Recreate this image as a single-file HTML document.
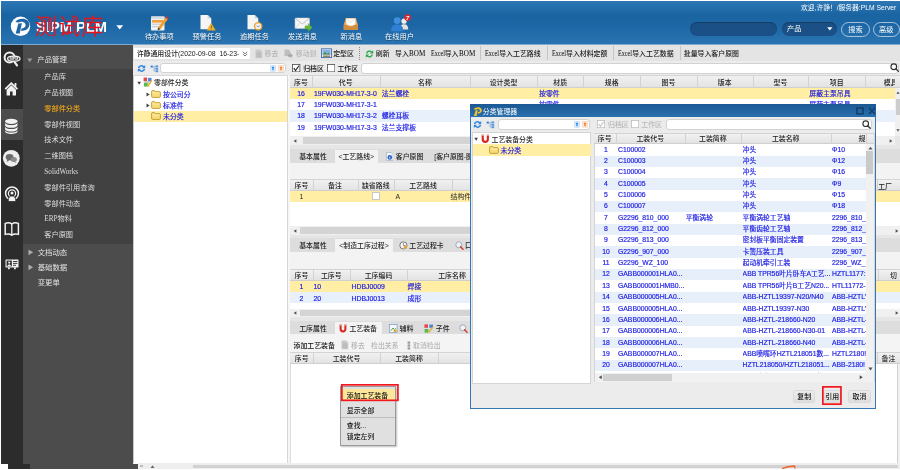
<!DOCTYPE html><html><head><meta charset="utf-8"><title>SIPM PLM</title><style>
*{box-sizing:border-box;margin:0;padding:0}
html,body{width:900px;height:470px;overflow:hidden;background:#fff}
body{position:relative;will-change:transform;font-family:"Liberation Sans","Noto Sans CJK SC",sans-serif;font-size:7px;color:#222;line-height:1;font-weight:500}
.a{position:absolute}
.t{position:absolute;white-space:nowrap;line-height:10px;height:10px}
.b{color:#1c1ce4;font-weight:400;-webkit-text-stroke:0.18px #1c1ce4}
.ser{font-family:"Liberation Serif","Noto Sans CJK SC",serif}
.hd{background:linear-gradient(#f4f4f4,#e2e2e2);}
.c{text-align:center}
.sq{display:inline-block;font-size:8px;transform-origin:0 50%;line-height:10px;vertical-align:top;color:#000}
</style></head><body>
<div class="a " style="left:1px;top:1px;width:899px;height:43.5px;background:linear-gradient(#2d77b4 0%,#2470ae 12%,#1b64a2 32%,#1c66a5 55%,#2670ae 85%,#2a74b2 100%)"></div>
<div class="a " style="left:1px;top:44.2px;width:899px;height:0.8px;background:#7fa9cf"></div>
<svg class="a" style="left:0px;top:0px" width="40" height="44" viewBox="0 0 40 44"><circle cx="20.5" cy="26.3" r="9.7" fill="#fdfdfd"/><path d="M15.4 22 C17.6 18.6 24 17.6 27.6 20.4 C31.2 23.4 29.6 29.2 24 30.5 L21 30.9 L21.6 28.5 C25 28 26.6 25.6 25 23.4 C23.6 21.6 20.6 21.4 18.5 22.6 Z" fill="#1f66a8"/><path d="M18.3 23.6 L21.9 23.2 L19.7 33.4 L15.7 33.4 Z" fill="#1f66a8"/></svg>
<div class="t " style="left:36.1px;top:22.0px;color:#fff;font-weight:bold;font-size:14.7px;line-height:16px;height:16px;top:18.6px">SIPM PLM</div>
<div class="t " style="left:35px;top:21.5px;color:#e8131b;font-size:21.7px;letter-spacing:1.5px;line-height:24px;height:24px;top:15.2px;font-weight:300;-webkit-text-stroke:0.45px #f0121a;font-family:"Liberation Serif","Noto Serif CJK SC",serif;">测试库</div>
<svg class="a" style="left:115.5px;top:24.5px" width="8" height="5" viewBox="0 0 8 5"><path d="M0.3 0.3H7.2L3.75 4.4Z" fill="#fff"/></svg>
<div class="t " style="left:134.3px;top:31.7px;width:50px;color:#fff;font-size:7.2px;text-align:center;font-weight:400;text-shadow:0 0.5px 0.5px rgba(0,0,0,.35)">待办事项</div>
<div class="t " style="left:182px;top:31.7px;width:50px;color:#fff;font-size:7.2px;text-align:center;font-weight:400;text-shadow:0 0.5px 0.5px rgba(0,0,0,.35)">预警任务</div>
<div class="t " style="left:229.5px;top:31.7px;width:50px;color:#fff;font-size:7.2px;text-align:center;font-weight:400;text-shadow:0 0.5px 0.5px rgba(0,0,0,.35)">逾期任务</div>
<div class="t " style="left:277.5px;top:31.7px;width:50px;color:#fff;font-size:7.2px;text-align:center;font-weight:400;text-shadow:0 0.5px 0.5px rgba(0,0,0,.35)">发送消息</div>
<div class="t " style="left:326.3px;top:31.7px;width:50px;color:#fff;font-size:7.2px;text-align:center;font-weight:400;text-shadow:0 0.5px 0.5px rgba(0,0,0,.35)">新消息</div>
<div class="t " style="left:374.5px;top:31.7px;width:50px;color:#fff;font-size:7.2px;text-align:center;font-weight:400;text-shadow:0 0.5px 0.5px rgba(0,0,0,.35)">在线用户</div>
<svg class="a" style="left:150px;top:15px" width="20" height="17" viewBox="0 0 20 17">
<rect x="1" y="1.5" width="13.5" height="14" rx="1" fill="#f4f4f4"/>
<rect x="1" y="1.5" width="13.5" height="2.6" fill="#d9dde2"/>
<rect x="2" y="5" width="11.5" height="2.6" fill="#f3a13a"/>
<rect x="2" y="8.6" width="11.5" height="1.2" fill="#c9ced4"/>
<rect x="2" y="11" width="9" height="1.2" fill="#c9ced4"/>
<path d="M8.2 12.6 L15.6 2.6 L17.8 4.2 L10.4 14.2 L7.6 15.2 Z" fill="#f0a030"/>
<path d="M15.6 2.6 L16.6 1.2 L18.8 2.8 L17.8 4.2Z" fill="#d6372c"/>
<path d="M8.2 12.6 L10.4 14.2 L7.6 15.2Z" fill="#444"/>
</svg>
<svg class="a" style="left:199px;top:14px" width="20" height="18" viewBox="0 0 20 18"><path d="M1.5 1 h7.2 l3.6 3.6 v10.6 h-10.8Z" fill="#f5f5f3"/><path d="M8.7 1 v3.6 h3.6Z" fill="#cfd3d6"/><path d="M12.2 9.3 L16.4 16.3 H8 Z" fill="#f2b632" stroke="#d89a1a" stroke-width="0.5"/><rect x="11.9" y="11.6" width="0.7" height="2.6" fill="#5a3c00"/><rect x="11.9" y="14.7" width="0.7" height="0.7" fill="#5a3c00"/></svg>
<svg class="a" style="left:246px;top:14px" width="20" height="18" viewBox="0 0 20 18"><path d="M1.5 1 h7.2 l3.6 3.6 v10.6 h-10.8Z" fill="#f5f5f3"/><path d="M8.7 1 v3.6 h3.6Z" fill="#cfd3d6"/><circle cx="12.2" cy="12.3" r="3.6" fill="#f3f3f7" stroke="#e8a020" stroke-width="1.3"/><path d="M10.8 11.6 L12.2 13 L13.7 11.6" stroke="#7a6aa8" stroke-width="0.9" fill="none"/></svg>
<svg class="a" style="left:294px;top:17px" width="20" height="15" viewBox="0 0 20 15">
<rect x="1" y="1" width="14.5" height="10.5" rx="0.8" fill="#f6f6f6" stroke="#c9c9c9" stroke-width="0.5"/>
<path d="M1.3 1.4 L8.2 7 L15.2 1.4" stroke="#b5b5b5" stroke-width="0.8" fill="none"/>
<path d="M1.3 11.2 L6 6" stroke="#c5c5c5" stroke-width="0.5"/><path d="M15.2 11.2 L10.5 6" stroke="#c5c5c5" stroke-width="0.5"/>
<path d="M11 9 h3.2 v-2.4 l4 3.9 l-4 3.9 v-2.4 h-3.2Z" fill="#6bb83a" stroke="#4e9a26" stroke-width="0.4"/>
</svg>
<svg class="a" style="left:343.3px;top:15.5px" width="16" height="15.5" viewBox="0 0 18 17">
<path d="M3 2 h11.5 l2.3 7.5 v5.8 h-16 v-5.8Z" fill="#e9a55a"/>
<rect x="3.6" y="2.6" width="10.4" height="8" fill="#fbfbfb"/>
<path d="M4 3 L8.8 6.6 L13.6 3" stroke="#d5d5d5" stroke-width="0.6" fill="none"/>
<path d="M0.8 9.5 h4.6 l1 2.2 h4.8 l1 -2.2 h4.6 v5.8 h-16Z" fill="#d48c3e"/>
</svg>
<svg class="a" style="left:388.5px;top:13px" width="24" height="20" viewBox="0 0 24 20">
<circle cx="15" cy="8.2" r="2.6" fill="#f1efe6"/><path d="M10.8 16.5 c0-4 2-5.2 4.2-5.2 s4.2 1.2 4.2 5.2Z" fill="#e6e4da"/>
<circle cx="8.2" cy="7.6" r="3.4" fill="#3f8fe0"/><path d="M2 18.2 c0-5.4 3-6.8 6.2-6.8 s6.2 1.4 6.2 6.8Z" fill="#2f7fd6"/>
<circle cx="18.6" cy="4.6" r="3.3" fill="#e0242c"/>
<text x="18.6" y="6.6" font-size="5.6" fill="#fff" text-anchor="middle" font-weight="bold" font-style="italic" font-family="Liberation Sans, sans-serif">7</text>
</svg>
<div class="t " style="left:801px;top:2.8px;color:#fff;font-size:6.75px;font-weight:400">欢迎,许静！/服务器:PLM Server</div>
<div class="a " style="left:689.5px;top:21.5px;width:87.5px;height:14px;background:#1a5085;border-radius:7px;box-shadow:inset 0 1px 1px rgba(0,0,0,.25)"></div>
<div class="a " style="left:781.5px;top:21.5px;width:55.5px;height:14px;background:#1a5085;border-radius:7px;box-shadow:inset 0 1px 1px rgba(0,0,0,.25)"></div>
<div class="t " style="left:787px;top:24.0px;color:#fff;font-size:7.2px;font-weight:400">产品</div>
<svg class="a" style="left:826.5px;top:27px" width="6" height="4" viewBox="0 0 6 4"><path d="M0.2 0.3H5.4L2.8 3.5Z" fill="#fff"/></svg>
<div class="a " style="left:841px;top:21.5px;width:29px;height:15px;border:1px solid rgba(255,255,255,.6);border-radius:7.5px"></div>
<div class="t " style="left:841px;top:24.5px;width:29px;color:#fff;font-size:7.2px;text-align:center;font-weight:400">搜索</div>
<div class="a " style="left:873px;top:21.5px;width:26.5px;height:15px;border:1px solid rgba(255,255,255,.6);border-radius:7.5px"></div>
<div class="t " style="left:873px;top:24.5px;width:26.5px;color:#fff;font-size:7.2px;text-align:center;font-weight:400">高级</div>
<div class="a " style="left:1px;top:45px;width:22px;height:418.5px;background:#2c2c2c"></div>
<div class="a " style="left:23px;top:45px;width:110px;height:418.5px;background:#4c4c4c"></div>
<div class="a " style="left:23px;top:69px;width:110px;height:175px;background:#414141"></div>
<div class="a " style="left:1px;top:109.4px;width:22px;height:30.2px;background:#4c4c4c"></div>
<div class="a " style="left:8px;top:463.5px;width:21.5px;height:5.5px;background:#2c2c2c"></div>
<div class="a " style="left:29.5px;top:463.5px;width:108px;height:5.5px;background:#4c4c4c"></div>
<div class="a " style="left:137.5px;top:463.3px;width:762.5px;height:5.3px;background:#eeeeee"></div>
<div class="a " style="left:193px;top:465.3px;width:704.5px;height:2.4px;background:#d2d2d2"></div>
<svg class="a" style="left:150px;top:464.8px" width="5" height="3.6" viewBox="0 0 5 4"><path d="M0 3.8H5L2.5 0.4Z" fill="#666"/></svg>
<div class="a " style="left:140px;top:465.3px;width:3px;height:2px;background:#bdbdbd"></div>
<svg class="a" style="left:781px;top:464px" width="16" height="6" viewBox="0 0 16 6"><path d="M1.6 4.4 C5 3 9 2.2 13.4 2 L14 4" stroke="#f2632a" stroke-width="1.3" fill="none" stroke-linecap="round"/></svg>
<svg class="a" style="left:27px;top:57.5px" width="6" height="5" viewBox="0 0 6 5"><path d="M0.3 0.5H5.3L2.8 4.2Z" fill="#9a9a9a"/></svg>
<div class="t " style="left:37.3px;top:55.2px;color:#e3e3e3;font-size:7.4px;font-weight:400">产品管理</div>
<div class="t " style="left:44.3px;top:72.1px;color:#dedede;font-size:7.2px;font-weight:400">产品库</div>
<div class="t " style="left:44.3px;top:87.9px;color:#dedede;font-size:7.2px;font-weight:400">产品视图</div>
<div class="t " style="left:44.3px;top:103.7px;color:#eaa21d;font-size:7.2px;font-weight:500">零部件分类</div>
<div class="t " style="left:44.3px;top:119.5px;color:#dedede;font-size:7.2px;font-weight:400">零部件视图</div>
<div class="t " style="left:44.3px;top:135.3px;color:#dedede;font-size:7.2px;font-weight:400">技术文件</div>
<div class="t " style="left:44.3px;top:151.1px;color:#dedede;font-size:7.2px;font-weight:400">二维图档</div>
<div class="t ser" style="left:44.3px;top:166.9px;color:#dedede;font-size:7.2px;font-weight:400">SolidWorks</div>
<div class="t " style="left:44.3px;top:182.7px;color:#dedede;font-size:7.2px;font-weight:400">零部件引用查询</div>
<div class="t " style="left:44.3px;top:198.5px;color:#dedede;font-size:7.2px;font-weight:400">零部件动态</div>
<div class="t ser" style="left:44.3px;top:214.3px;color:#dedede;font-size:7.2px;font-weight:400">ERP物料</div>
<div class="t " style="left:44.3px;top:230.1px;color:#dedede;font-size:7.2px;font-weight:400">客户原图</div>
<div class="t " style="left:37.7px;top:247.8px;color:#e3e3e3;font-size:7.4px;font-weight:400">文档动态</div>
<svg class="a" style="left:28px;top:249.3px" width="5.6" height="6.6" viewBox="0 0 5 6"><path d="M0.4 0.4V5.6L4.6 3Z" fill="#adadad"/></svg>
<div class="t " style="left:37.7px;top:262.9px;color:#e3e3e3;font-size:7.4px;font-weight:400">基础数据</div>
<svg class="a" style="left:28px;top:264.4px" width="5.6" height="6.6" viewBox="0 0 5 6"><path d="M0.4 0.4V5.6L4.6 3Z" fill="#adadad"/></svg>
<div class="t " style="left:37.7px;top:278.0px;color:#e3e3e3;font-size:7.4px;font-weight:400">变更单</div>
<svg class="a" style="left:0px;top:46px" width="24" height="24" viewBox="0 0 24 24">
<circle cx="9.6" cy="11.6" r="5" fill="none" stroke="#f2f2f2" stroke-width="2"/>
<path d="M14.6 16.2 L17 19.4" stroke="#f2f2f2" stroke-width="2.2" stroke-linecap="round"/>
<ellipse cx="13.8" cy="12.7" rx="6.2" ry="2.5" fill="#3a3a3a" stroke="#f2f2f2" stroke-width="1.3"/>
<text x="13.8" y="14" font-size="3.6" font-weight="bold" fill="#f2f2f2" text-anchor="middle" font-family="Liberation Sans, sans-serif">SIPM</text>
</svg>
<svg class="a" style="left:4px;top:81px" width="15" height="16" viewBox="0 0 15 16">
<path d="M7.3 1 L14 7.6 L12.8 8.8 L7.3 3.4 L1.8 8.8 L0.6 7.6 Z" fill="#f2f2f2"/>
<path d="M2.6 8.8 L7.3 4.3 L12 8.8 V14.6 H8.6 V10.4 H6 V14.6 H2.6Z" fill="#f2f2f2"/>
<rect x="10.6" y="2" width="1.8" height="3.4" fill="#f2f2f2"/>
</svg>
<svg class="a" style="left:4.3px;top:117.6px" width="15" height="16" viewBox="0 0 15 16">
<ellipse cx="7.3" cy="3.3" rx="6.2" ry="2.6" fill="#f2f2f2"/>
<path d="M1.1 4.6 c0 3.4 12.4 3.4 12.4 0 v2.6 c0 3.4 -12.4 3.4 -12.4 0Z" fill="#f2f2f2"/>
<path d="M1.1 8.4 c0 3.4 12.4 3.4 12.4 0 v2.6 c0 3.4 -12.4 3.4 -12.4 0Z" fill="#f2f2f2"/>
<path d="M1.1 12.0 c0 3.4 12.4 3.4 12.4 0 v1.2 c0 3.6 -12.4 3.6 -12.4 0Z" fill="#f2f2f2"/>
</svg>
<svg class="a" style="left:2px;top:149.2px" width="19" height="19" viewBox="0 0 19 19">
<circle cx="9.3" cy="9.3" r="8.4" fill="#ededed"/>
<ellipse cx="7.6" cy="8.2" rx="3.9" ry="3.1" fill="#6a6a6a"/><path d="M5.4 10 L4.6 13 L8 10.8Z" fill="#6a6a6a"/>
<ellipse cx="11.8" cy="10.4" rx="3.1" ry="2.5" fill="#8a8a8a"/><path d="M12.6 12 L14.6 14.2 L10.8 12.6Z" fill="#8a8a8a"/>
</svg>
<svg class="a" style="left:4px;top:186px" width="16" height="16" viewBox="0 0 16 16">
<circle cx="8" cy="7.4" r="6.4" fill="none" stroke="#f2f2f2" stroke-width="1.5"/>
<circle cx="8" cy="7.4" r="3.6" fill="none" stroke="#f2f2f2" stroke-width="1.2"/>
<circle cx="8" cy="7" r="1.5" fill="#f2f2f2"/>
<path d="M4.2 15.5 c0 -4.4 1.8 -5.4 3.8 -5.4 s3.8 1 3.8 5.4Z" fill="#f2f2f2" stroke="#2c2c2c" stroke-width="0.8"/>
</svg>
<svg class="a" style="left:4px;top:221px" width="16" height="16" viewBox="0 0 16 16">
<path d="M1.2 2.4 C3.6 1.4 6 1.6 7.8 3 C9.6 1.6 12 1.4 14.4 2.4 V13.4 C12 12.6 9.6 12.8 7.8 14.2 C6 12.8 3.6 12.6 1.2 13.4Z" fill="none" stroke="#f2f2f2" stroke-width="1.5" stroke-linejoin="round"/>
<path d="M7.8 3 V14.2" stroke="#f2f2f2" stroke-width="1.3"/>
</svg>
<svg class="a" style="left:4.5px;top:259px" width="14" height="10.5" viewBox="0 0 14 10.5">
<rect x="0.5" y="0.5" width="13" height="8" rx="0.6" fill="#f2f2f2"/>
<rect x="1.6" y="1.6" width="5.2" height="5.8" fill="#2c2c2c"/>
<circle cx="4.2" cy="3.6" r="1.1" fill="#f2f2f2"/><path d="M2.4 7.2 c0-2.2 3.6-2.2 3.6 0Z" fill="#f2f2f2"/>
<rect x="8" y="2" width="4.4" height="0.9" fill="#2c2c2c"/><rect x="8" y="3.9" width="4.4" height="0.9" fill="#2c2c2c"/><rect x="8" y="5.8" width="3" height="0.9" fill="#2c2c2c"/>
<rect x="9" y="8.4" width="1.8" height="1.8" fill="#f2f2f2"/><rect x="3" y="8.4" width="1.8" height="1.8" fill="#f2f2f2"/>
</svg>
<div class="a " style="left:133px;top:45px;width:767px;height:16px;background:#e4e4e4"></div>
<div class="a " style="left:133px;top:60.5px;width:767px;height:0.8px;background:#cfcfcf"></div>
<div class="a " style="left:133px;top:61px;width:767px;height:14.5px;background:#ececec"></div>
<div class="a " style="left:134px;top:47.5px;width:115.5px;height:11.3px;background:#fff"></div>
<div class="t " style="left:136.7px;top:48.9px;color:#222;font-size:6.9px">许静通用设计(2020-09-08&nbsp; 16-23-</div>
<svg class="a" style="left:241.5px;top:50.5px" width="6" height="6" viewBox="0 0 6 6"><path d="M0.8 0.8 L3 2.8 L5.2 0.8 M0.8 3 L3 5 L5.2 3" stroke="#555" stroke-width="0.8" fill="none"/></svg>
<svg class="a" style="left:255px;top:48.5px" width="8" height="10" viewBox="0 0 8 10"><path d="M0.5 0.5 h4.6 l2.2 2.2 v6.6 h-6.8Z" fill="#c8c8c8"/><path d="M1.6 4 h4.4 M1.6 5.6 h4.4 M1.6 7.2 h4.4" stroke="#aaa" stroke-width="0.6"/></svg>
<div class="t " style="left:264.6px;top:48.9px;font-size:6.9px;color:#b4b4b4">移去</div>
<svg class="a" style="left:284px;top:48.5px" width="9" height="10" viewBox="0 0 9 10"><path d="M0.5 0.5 h4 l1.8 1.8 v4.6 h-5.8Z" fill="#bdbdbd"/><path d="M4 5.4 h2.4 v-1.6 l2.4 2.8 l-2.4 2.8 v-1.6 h-2.4Z" fill="#a8a8a8"/></svg>
<div class="t " style="left:295.8px;top:48.9px;font-size:6.9px;color:#b4b4b4">移动到</div>
<svg class="a" style="left:320.5px;top:48px" width="11" height="11" viewBox="0 0 11 11"><rect x="0.5" y="0.8" width="10" height="8.8" fill="#dfe9f5" stroke="#3f6fa8" stroke-width="0.9"/><rect x="1.6" y="2" width="7.8" height="4.6" fill="#7fb0e0"/><path d="M1.6 6.6 l2.4-2.6 l2 2 l1.4-1.2 l2 1.8Z" fill="#4d8a3c"/><rect x="2" y="7.6" width="7" height="1.2" fill="#8c6a3a"/></svg>
<div class="t " style="left:333.2px;top:48.9px;font-size:6.9px;color:#1a1a1a">定型区</div>
<div class="a " style="left:359.4px;top:47px;width:1px;height:12.5px;background:repeating-linear-gradient(#8a8a8a 0 1px,transparent 1px 2px)"></div>
<svg class="a" style="left:364.5px;top:48.5px" width="9" height="10" viewBox="0 0 9 10"><path d="M1 4.4 A3.6 3.6 0 0 1 7 2.4 L8.2 1.2 V4.6 H4.8 L6 3.4 A2.2 2.2 0 0 0 2.4 4.4Z" fill="#2aa84a"/><path d="M8 5.6 A3.6 3.6 0 0 1 2 7.6 L0.8 8.8 V5.4 H4.2 L3 6.6 A2.2 2.2 0 0 0 6.6 5.6Z" fill="#2aa84a"/></svg>
<div class="t " style="left:375.8px;top:48.9px;font-size:6.9px;color:#1a1a1a">刷新</div>
<div class="t " style="left:395px;top:48.9px;font-size:6.9px;color:#1a1a1a">导入<span class="ser sq" style="transform:scaleX(.89);margin-right:-2px">BOM</span></div>
<div class="t " style="left:430.7px;top:48.9px;font-size:6.9px;color:#1a1a1a"><span class="ser sq" style="transform:scaleX(.77);margin-right:-4.2px">Excel</span>导入<span class="ser sq" style="transform:scaleX(.89);margin-right:-2px">BOM</span></div>
<div class="a " style="left:479.5px;top:46px;width:0.8px;height:14px;background:#c4c4c4"></div>
<div class="t " style="left:485.2px;top:48.9px;font-size:6.9px;color:#1a1a1a"><span class="ser sq" style="transform:scaleX(.77);margin-right:-4.2px">Excel</span>导入工艺路线</div>
<div class="a " style="left:546.7px;top:46px;width:0.8px;height:14px;background:#c4c4c4"></div>
<div class="t " style="left:552px;top:48.9px;font-size:6.9px;color:#1a1a1a"><span class="ser sq" style="transform:scaleX(.77);margin-right:-4.2px">Excel</span>导入材料定额</div>
<div class="a " style="left:613px;top:46px;width:0.8px;height:14px;background:#c4c4c4"></div>
<div class="t " style="left:618.2px;top:48.9px;font-size:6.9px;color:#1a1a1a"><span class="ser sq" style="transform:scaleX(.77);margin-right:-4.2px">Excel</span>导入工艺数据</div>
<div class="a " style="left:679.5px;top:46px;width:0.8px;height:14px;background:#c4c4c4"></div>
<div class="t " style="left:683.8px;top:48.9px;font-size:6.9px;color:#1a1a1a">批量导入客户原图</div>
<svg class="a" style="left:136.5px;top:63.5px" width="9" height="9" viewBox="0 0 9 9"><path d="M0.8 4 A3.6 3.4 0 0 1 7 2.2 L8.2 1 V4.2 H5 L6 3.2 A2.2 2.2 0 0 0 2.4 4Z" fill="#2f86e0"/><path d="M8.2 5 A3.6 3.4 0 0 1 2 6.8 L0.8 8 V4.8 H4 L3 5.8 A2.2 2.2 0 0 0 6.6 5Z" fill="#2f86e0"/></svg>
<svg class="a" style="left:149.5px;top:63.5px" width="9" height="9" viewBox="0 0 9 9"><rect x="0.6" y="1.6" width="2.2" height="2" fill="#3b86d6"/><path d="M2.8 2.6 H5.4 M4 2.6 V7 H5.4 M4 4.8 H5.4" stroke="#7a9fc8" stroke-width="0.6" fill="none"/><rect x="5.4" y="1.4" width="2.8" height="2" fill="#5a9be0"/><rect x="5.4" y="3.8" width="2.8" height="2" fill="#5a9be0"/><rect x="5.4" y="6.2" width="2.8" height="2" fill="#5a9be0"/></svg>
<div class="a " style="left:160px;top:62.8px;width:125.5px;height:10.6px;background:#fff;border:0.5px solid #d2d2d2;border-radius:3px"></div>
<svg class="a" style="left:269.5px;top:65px" width="6" height="6.5" viewBox="0 0 6 6.5"><rect x="0.3" y="0.3" width="5.4" height="5.9" rx="0.8" fill="#e6f1fb" stroke="#9cc4ea" stroke-width="0.5"/><path d="M3 1.2 L4.7 3 H3.7 V5.2 H2.3 V3 H1.3Z" fill="#2f86e0"/></svg>
<svg class="a" style="left:277.5px;top:65px" width="6" height="6.5" viewBox="0 0 6 6.5"><rect x="0.3" y="0.3" width="5.4" height="5.9" rx="0.8" fill="#fdeee0" stroke="#f0b98a" stroke-width="0.5"/><path d="M3 1.2 L4.7 3 H3.7 V5.2 H2.3 V3 H1.3Z" fill="#f07a1e"/></svg>
<svg class="a" style="left:292.3px;top:63.6px" width="8.4" height="8.4" viewBox="0 0 8.4 8.4"><rect x="0.5" y="0.5" width="7.4" height="7.4" fill="#fff" stroke="#4a4a4a" stroke-width="0.8"/><path d="M1.8 4.2 L3.528 6.5 L6.9 1.7" stroke="#222" stroke-width="1.1" fill="none"/></svg>
<div class="t " style="left:303.2px;top:63.9px;font-size:6.9px;color:#111">归档区</div>
<svg class="a" style="left:326.6px;top:63.6px" width="8.4" height="8.4" viewBox="0 0 8.4 8.4"><rect x="0.5" y="0.5" width="7.4" height="7.4" fill="#fff" stroke="#4a4a4a" stroke-width="0.8"/></svg>
<div class="t " style="left:337.4px;top:63.9px;font-size:6.9px;color:#111">工作区</div>
<div class="a " style="left:361px;top:63px;width:537.5px;height:10.6px;background:#fff;border:0.5px solid #d2d2d2;border-radius:3px"></div>
<svg class="a" style="left:889.8px;top:63.2px" width="9.2" height="9.2" viewBox="0 0 8 8"><circle cx="3.3" cy="3.3" r="2.5" fill="none" stroke="#333" stroke-width="1"/><path d="M5.1 5.1 L7.3 7.3" stroke="#333" stroke-width="1.2" stroke-linecap="round"/></svg>
<div class="a " style="left:133px;top:75.3px;width:154.5px;height:388px;background:#fff;border-left:0.7px solid #c8c8c8;border-right:0.7px solid #d6d6d6;border-top:0.7px solid #d8d8d8"></div>
<div class="a " style="left:134px;top:110.6px;width:153px;height:11.4px;background:#ffeea3"></div>
<svg class="a" style="left:136.8px;top:81px" width="4.4" height="4.2" viewBox="0 0 4 4"><path d="M0.2 0.6H3.8L2 3.6Z" fill="#444"/></svg>
<svg class="a" style="left:143.4px;top:77.2px" width="9.6" height="10.6" viewBox="0 0 9 10"><rect x="0.5" y="0.5" width="3.4" height="3.6" fill="#e24a4a"/><rect x="4.8" y="0.8" width="3.2" height="3.4" fill="#4a7fd8"/><rect x="0.8" y="5.2" width="3.6" height="3.8" fill="#58b84a"/><path d="M4.4 9 L8.2 3.2" stroke="#e8b02a" stroke-width="1.4"/><path d="M3 3 L6 6.6" stroke="#888" stroke-width="0.6"/></svg>
<div class="t " style="left:154px;top:78.4px;font-size:6.9px;color:#222">零部件分类</div>
<svg class="a" style="left:146px;top:91.5px" width="4" height="5" viewBox="0 0 4 5"><path d="M0.5 0.4V4.6L3.7 2.5Z" fill="#444"/></svg>
<svg class="a" style="left:151px;top:89.8px" width="10" height="8" viewBox="0 0 10 8"><path d="M0.6 1.6 Q0.6 0.6 1.6 0.6 H3.6 L4.6 1.6 H8.4 Q9.4 1.6 9.4 2.6 V6.4 Q9.4 7.4 8.4 7.4 H1.6 Q0.6 7.4 0.6 6.4Z" fill="#f7dc7a" stroke="#b8901e" stroke-width="0.8"/><path d="M1.4 3 H8.6" stroke="#fdf3c4" stroke-width="0.8"/></svg>
<div class="t b" style="left:163px;top:89.6px;font-size:6.9px">按公司分</div>
<svg class="a" style="left:146px;top:102.8px" width="4" height="5" viewBox="0 0 4 5"><path d="M0.5 0.4V4.6L3.7 2.5Z" fill="#444"/></svg>
<svg class="a" style="left:151px;top:101.1px" width="10" height="8" viewBox="0 0 10 8"><path d="M0.6 1.6 Q0.6 0.6 1.6 0.6 H3.6 L4.6 1.6 H8.4 Q9.4 1.6 9.4 2.6 V6.4 Q9.4 7.4 8.4 7.4 H1.6 Q0.6 7.4 0.6 6.4Z" fill="#f7dc7a" stroke="#b8901e" stroke-width="0.8"/><path d="M1.4 3 H8.6" stroke="#fdf3c4" stroke-width="0.8"/></svg>
<div class="t b" style="left:163px;top:100.9px;font-size:6.9px">标准件</div>
<svg class="a" style="left:151px;top:112.2px" width="10" height="8" viewBox="0 0 10 8"><path d="M0.6 1.6 Q0.6 0.6 1.6 0.6 H3.6 L4.6 1.6 H8.4 Q9.4 1.6 9.4 2.6 V6.4 Q9.4 7.4 8.4 7.4 H1.6 Q0.6 7.4 0.6 6.4Z" fill="#f7dc7a" stroke="#b8901e" stroke-width="0.8"/><path d="M1.4 3 H8.6" stroke="#fdf3c4" stroke-width="0.8"/></svg>
<div class="t b" style="left:163px;top:112.0px;font-size:6.9px">未分类</div>
<div class="a " style="left:288px;top:75.3px;width:612px;height:388px;background:#e6e6e6"></div>
<div class="a " style="left:287.5px;top:75.3px;width:2.5px;height:388px;background:#f6f6f6"></div>
<div class="a " style="left:290px;top:75.3px;width:605px;height:60.7px;background:#fff"></div>
<div class="a " style="left:290px;top:75.3px;width:610px;height:13.2px;background:linear-gradient(#f1f1f1,#e3e3e3);border-top:0.6px solid #d4d4d4;border-bottom:0.6px solid #cfcfcf"></div>
<div class="t " style="left:290.5px;top:77.6px;width:21.0px;font-size:6.9px;color:#222;text-align:center">序号</div>
<div class="a " style="left:311.5px;top:75.89999999999999px;width:0.7px;height:12.0px;background:#d2d2d2"></div>
<div class="t " style="left:311.5px;top:77.6px;width:68.5px;font-size:6.9px;color:#222;text-align:center">代号</div>
<div class="a " style="left:380px;top:75.89999999999999px;width:0.7px;height:12.0px;background:#d2d2d2"></div>
<div class="t " style="left:380px;top:77.6px;width:90px;font-size:6.9px;color:#222;text-align:center">名称</div>
<div class="a " style="left:470px;top:75.89999999999999px;width:0.7px;height:12.0px;background:#d2d2d2"></div>
<div class="t " style="left:470px;top:77.6px;width:67px;font-size:6.9px;color:#222;text-align:center">设计类型</div>
<div class="a " style="left:537px;top:75.89999999999999px;width:0.7px;height:12.0px;background:#d2d2d2"></div>
<div class="t " style="left:537px;top:77.6px;width:46.39999999999998px;font-size:6.9px;color:#222;text-align:center">材质</div>
<div class="a " style="left:583.4px;top:75.89999999999999px;width:0.7px;height:12.0px;background:#d2d2d2"></div>
<div class="t " style="left:583.4px;top:77.6px;width:56.60000000000002px;font-size:6.9px;color:#222;text-align:center">规格</div>
<div class="a " style="left:640px;top:75.89999999999999px;width:0.7px;height:12.0px;background:#d2d2d2"></div>
<div class="t " style="left:640px;top:77.6px;width:56.799999999999955px;font-size:6.9px;color:#222;text-align:center">图号</div>
<div class="a " style="left:696.8px;top:75.89999999999999px;width:0.7px;height:12.0px;background:#d2d2d2"></div>
<div class="t " style="left:696.8px;top:77.6px;width:55.90000000000009px;font-size:6.9px;color:#222;text-align:center">版本</div>
<div class="a " style="left:752.7px;top:75.89999999999999px;width:0.7px;height:12.0px;background:#d2d2d2"></div>
<div class="t " style="left:752.7px;top:77.6px;width:55.5px;font-size:6.9px;color:#222;text-align:center">型号</div>
<div class="a " style="left:808.2px;top:75.89999999999999px;width:0.7px;height:12.0px;background:#d2d2d2"></div>
<div class="t " style="left:808.2px;top:77.6px;width:57.09999999999991px;font-size:6.9px;color:#222;text-align:center">项目</div>
<div class="a " style="left:865.3px;top:75.89999999999999px;width:0.7px;height:12.0px;background:#d2d2d2"></div>
<div class="t " style="left:883.8px;top:77.7px;font-size:6.9px;color:#222;width:11.2px;overflow:hidden">模具</div>
<div class="a " style="left:290px;top:87.8px;width:605px;height:11.34px;background:#ffeea3"></div>
<div class="t b" style="left:290.5px;top:88.77px;width:21px;font-size:6.9px;text-align:center">16</div>
<div class="t b" style="left:314px;top:88.77px;font-size:6.9px">19FW030-MH17-3-0</div>
<div class="t b" style="left:381.7px;top:88.77px;font-size:6.9px">法兰螺栓</div>
<div class="t b" style="left:539px;top:88.77px;font-size:6.9px">按零件</div>
<div class="t b" style="left:809.3px;top:88.77px;font-size:6.9px">屏蔽主泵吊具</div>
<div class="a " style="left:290px;top:99.14px;width:605px;height:11.34px;background:#fff"></div>
<div class="t b" style="left:290.5px;top:100.11px;width:21px;font-size:6.9px;text-align:center">17</div>
<div class="t b" style="left:314px;top:100.11px;font-size:6.9px">19FW030-MH17-3-1</div>
<div class="t b" style="left:381.7px;top:100.11px;font-size:6.9px"></div>
<div class="t b" style="left:539px;top:100.11px;font-size:6.9px">按零件</div>
<div class="t b" style="left:809.3px;top:100.11px;font-size:6.9px">屏蔽主泵吊具</div>
<div class="a " style="left:290px;top:110.47999999999999px;width:605px;height:11.34px;background:#e8f0fb"></div>
<div class="t b" style="left:290.5px;top:111.45px;width:21px;font-size:6.9px;text-align:center">18</div>
<div class="t b" style="left:314px;top:111.45px;font-size:6.9px">19FW030-MH17-3-2</div>
<div class="t b" style="left:381.7px;top:111.45px;font-size:6.9px">螺栓耳板</div>
<div class="t b" style="left:539px;top:111.45px;font-size:6.9px">按零件</div>
<div class="t b" style="left:809.3px;top:111.45px;font-size:6.9px">屏蔽主泵吊具</div>
<div class="a " style="left:290px;top:121.82px;width:605px;height:11.34px;background:#fff"></div>
<div class="t b" style="left:290.5px;top:122.79px;width:21px;font-size:6.9px;text-align:center">19</div>
<div class="t b" style="left:314px;top:122.79px;font-size:6.9px">19FW030-MH17-3-3</div>
<div class="t b" style="left:381.7px;top:122.79px;font-size:6.9px">法兰支撑板</div>
<div class="t b" style="left:539px;top:122.79px;font-size:6.9px">按零件</div>
<div class="t b" style="left:809.3px;top:122.79px;font-size:6.9px">屏蔽主泵吊具</div>
<div class="a " style="left:895px;top:88.4px;width:5px;height:47.6px;background:#f0f0f0"></div>
<div class="a " style="left:895.6px;top:98.5px;width:4.4px;height:16px;background:#cdcdcd"></div>
<svg class="a" style="left:895.5px;top:91px" width="4" height="3" viewBox="0 0 4 3"><path d="M0.3 2.7H3.7L2 0.4Z" fill="#555"/></svg>
<svg class="a" style="left:895.5px;top:129px" width="4" height="3" viewBox="0 0 4 3"><path d="M0.3 0.3H3.7L2 2.6Z" fill="#555"/></svg>
<div class="a " style="left:290px;top:136.3px;width:605px;height:9.2px;background:#f0f0f0"></div>
<svg class="a" style="left:293px;top:138.9px" width="4" height="4" viewBox="0 0 4 4"><path d="M3.4 0.3V3.7L0.6 2Z" fill="#555"/></svg>
<div class="a " style="left:303px;top:137.3px;width:170px;height:7.199999999999999px;background:#d4d4d4"></div>
<svg class="a" style="left:888.5px;top:138.7px" width="4" height="4" viewBox="0 0 4 4"><path d="M0.6 0.3V3.7L3.4 2Z" fill="#555"/></svg>
<div class="a " style="left:290px;top:149px;width:612px;height:13.5px;background:#dddddd"></div>
<div class="t " style="left:291px;top:151.5px;width:44px;font-size:6.9px;color:#222;text-align:center">基本属性</div>
<div class="a " style="left:334.5px;top:149.5px;width:43.5px;height:14px;background:#f3f3f3"></div>
<div class="t " style="left:334.5px;top:151.5px;width:43.5px;font-size:6.9px;color:#222;text-align:center">&lt;工艺路线&gt;</div>
<svg class="a" style="left:385.6px;top:151.6px" width="7.5" height="9" viewBox="0 0 7.5 9"><path d="M0.5 0.5 H5 L7 2.5 V8.5 H0.5Z" fill="#f4f7fb" stroke="#9fb4cc" stroke-width="0.7"/><circle cx="3.8" cy="5.4" r="2.3" fill="#2a62c8"/><rect x="3.4" y="4.6" width="0.8" height="2" fill="#fff"/></svg>
<div class="t " style="left:395.8px;top:151.5px;font-size:6.9px;color:#222">客户原图</div>
<div class="t " style="left:434px;top:151.5px;width:48px;font-size:6.9px;color:#222;text-align:center">[客户原图-图档]</div>
<div class="a " style="left:290px;top:162.5px;width:612px;height:17px;background:#f3f3f3"></div>
<div class="a " style="left:290px;top:180.3px;width:612px;height:46px;background:#fff"></div>
<div class="a " style="left:290px;top:179px;width:610px;height:12px;background:linear-gradient(#f1f1f1,#e3e3e3);border-top:0.6px solid #d4d4d4;border-bottom:0.6px solid #cfcfcf"></div>
<div class="t " style="left:290.5px;top:180.7px;width:22.0px;font-size:6.9px;color:#222;text-align:center">序号</div>
<div class="a " style="left:312.5px;top:179.6px;width:0.7px;height:10.8px;background:#d2d2d2"></div>
<div class="t " style="left:312.5px;top:180.7px;width:45.0px;font-size:6.9px;color:#222;text-align:center">备注</div>
<div class="a " style="left:357.5px;top:179.6px;width:0.7px;height:10.8px;background:#d2d2d2"></div>
<div class="t " style="left:357.5px;top:180.7px;width:36.5px;font-size:6.9px;color:#222;text-align:center">缺省路线</div>
<div class="a " style="left:394px;top:179.6px;width:0.7px;height:10.8px;background:#d2d2d2"></div>
<div class="t " style="left:394px;top:180.7px;width:58px;font-size:6.9px;color:#222;text-align:center">工艺路线</div>
<div class="a " style="left:452px;top:179.6px;width:0.7px;height:10.8px;background:#d2d2d2"></div>
<div class="a " style="left:877px;top:179.6px;width:0.7px;height:10.8px;background:#d2d2d2"></div>
<div class="t " style="left:878.2px;top:181.5px;font-size:6.9px;color:#222">工厂</div>
<div class="a " style="left:290px;top:191.2px;width:612px;height:10.8px;background:#ffeea3"></div>
<div class="t " style="left:290.5px;top:192.0px;width:22px;font-size:6.9px;text-align:center;color:#2a2a2a;font-weight:400">1</div>
<svg class="a" style="left:372px;top:192.2px" width="8" height="8" viewBox="0 0 8 8"><rect x="0.5" y="0.5" width="7" height="7" fill="#fff" stroke="#bdbdbd" stroke-width="0.8"/></svg>
<div class="t " style="left:395.5px;top:192.0px;font-size:6.9px;color:#2a2a2a;font-weight:400">A</div>
<div class="t " style="left:450.5px;top:192.0px;font-size:6.9px;color:#2a2a2a;font-weight:400">结构件</div>
<div class="a " style="left:290px;top:226.2px;width:612px;height:8.6px;background:#f0f0f0"></div>
<svg class="a" style="left:895px;top:228.5px" width="4" height="4" viewBox="0 0 4 4"><path d="M0.6 0.3V3.7L3.4 2Z" fill="#555"/></svg>
<svg class="a" style="left:293px;top:228.5px" width="4" height="4" viewBox="0 0 4 4"><path d="M3.4 0.3V3.7L0.6 2Z" fill="#555"/></svg>
<div class="a " style="left:299.5px;top:227.2px;width:560px;height:6.6px;background:#d4d4d4"></div>
<div class="a " style="left:290px;top:238px;width:612px;height:13.5px;background:#dddddd"></div>
<div class="t " style="left:291px;top:240.5px;width:44px;font-size:6.9px;color:#222;text-align:center">基本属性</div>
<div class="a " style="left:335px;top:238.5px;width:58px;height:14px;background:#f3f3f3"></div>
<div class="t " style="left:335px;top:240.5px;width:58px;font-size:6.9px;color:#222;text-align:center">&lt;制造工序过程&gt;</div>
<svg class="a" style="left:399px;top:240.6px" width="9" height="9" viewBox="0 0 9 9"><circle cx="4.4" cy="4.4" r="3.6" fill="#f6f6f6" stroke="#6e6e6e" stroke-width="0.9"/><path d="M4.4 2 V4.6 H6.6" stroke="#777" stroke-width="0.8" fill="none"/><circle cx="6.4" cy="6.2" r="1.6" fill="#eaa22a"/></svg>
<div class="t " style="left:409.3px;top:240.5px;font-size:6.9px;color:#222">工艺过程卡</div>
<svg class="a" style="left:454.6px;top:240.6px" width="9" height="9" viewBox="0 0 9 9"><circle cx="3.8" cy="3.8" r="3" fill="#eef3f8" stroke="#9aa4b0" stroke-width="0.9"/><path d="M5.6 5.8 L8 8.2" stroke="#d0342c" stroke-width="1.4" stroke-linecap="round"/></svg>
<div class="t " style="left:465px;top:240.5px;font-size:6.9px;color:#222">口</div>
<div class="a " style="left:290px;top:251.5px;width:612px;height:17.5px;background:#f3f3f3"></div>
<div class="a " style="left:290px;top:270px;width:612px;height:39px;background:#fff"></div>
<div class="a " style="left:290px;top:268.8px;width:610px;height:12.4px;background:linear-gradient(#f1f1f1,#e3e3e3);border-top:0.6px solid #d4d4d4;border-bottom:0.6px solid #cfcfcf"></div>
<div class="t " style="left:290.5px;top:270.7px;width:22.0px;font-size:6.9px;color:#222;text-align:center">序号</div>
<div class="a " style="left:312.5px;top:269.40000000000003px;width:0.7px;height:11.200000000000001px;background:#d2d2d2"></div>
<div class="t " style="left:312.5px;top:270.7px;width:37.5px;font-size:6.9px;color:#222;text-align:center">工序号</div>
<div class="a " style="left:350px;top:269.40000000000003px;width:0.7px;height:11.200000000000001px;background:#d2d2d2"></div>
<div class="t " style="left:350px;top:270.7px;width:57px;font-size:6.9px;color:#222;text-align:center">工序编码</div>
<div class="a " style="left:407px;top:269.40000000000003px;width:0.7px;height:11.200000000000001px;background:#d2d2d2"></div>
<div class="t " style="left:407px;top:270.7px;width:90px;font-size:6.9px;color:#222;text-align:center">工序名称</div>
<div class="a " style="left:497px;top:269.40000000000003px;width:0.7px;height:11.200000000000001px;background:#d2d2d2"></div>
<div class="a " style="left:878px;top:269.40000000000003px;width:0.7px;height:11.200000000000001px;background:#d2d2d2"></div>
<div class="t " style="left:890px;top:270.7px;font-size:6.9px;color:#222">切</div>
<div class="a " style="left:290px;top:281.2px;width:612px;height:11px;background:#ffeea3"></div>
<div class="a " style="left:290px;top:292.2px;width:612px;height:11.3px;background:#e8f0fb"></div>
<div class="t b" style="left:290.5px;top:282.3px;width:22px;font-size:6.9px;text-align:center">1</div>
<div class="t b" style="left:313.5px;top:282.3px;font-size:6.9px">10</div>
<div class="t b" style="left:351.5px;top:282.3px;font-size:6.9px">HDBJ0009</div>
<div class="t b" style="left:407.5px;top:282.3px;font-size:6.9px">焊接</div>
<div class="t b" style="left:290.5px;top:293.5px;width:22px;font-size:6.9px;text-align:center">2</div>
<div class="t b" style="left:313.5px;top:293.5px;font-size:6.9px">20</div>
<div class="t b" style="left:351.5px;top:293.5px;font-size:6.9px">HDBJ0013</div>
<div class="t b" style="left:407.5px;top:293.5px;font-size:6.9px">成形</div>
<div class="a " style="left:290px;top:309.4px;width:612px;height:7.8px;background:#f0f0f0"></div>
<svg class="a" style="left:895px;top:311.29999999999995px" width="4" height="4" viewBox="0 0 4 4"><path d="M0.6 0.3V3.7L3.4 2Z" fill="#555"/></svg>
<svg class="a" style="left:293px;top:311.29999999999995px" width="4" height="4" viewBox="0 0 4 4"><path d="M3.4 0.3V3.7L0.6 2Z" fill="#555"/></svg>
<div class="a " style="left:299.5px;top:310.4px;width:560px;height:5.8px;background:#d4d4d4"></div>
<div class="a " style="left:290px;top:321px;width:612px;height:13.5px;background:#dddddd"></div>
<div class="t " style="left:291px;top:323.5px;width:44px;font-size:6.9px;color:#222;text-align:center">工序属性</div>
<div class="a " style="left:335px;top:321.5px;width:47px;height:14px;background:#f3f3f3"></div>
<svg class="a" style="left:338.8px;top:323.6px" width="8" height="9" viewBox="0 0 8 9"><path d="M1.6 0.6 V5 A2.4 2.4 0 0 0 6.4 5 V0.6" fill="none" stroke="#d8261c" stroke-width="2"/><rect x="0.6" y="0.3" width="2" height="1.4" fill="#e8b8a8"/><rect x="5.4" y="0.3" width="2" height="1.4" fill="#e8b8a8"/></svg>
<div class="t " style="left:349.4px;top:323.5px;font-size:6.9px;color:#222">工艺装备</div>
<svg class="a" style="left:389px;top:323.6px" width="9" height="9" viewBox="0 0 9 9"><rect x="0.5" y="0.5" width="7.6" height="8" fill="#f4f8fc" stroke="#7a9ac0" stroke-width="0.7"/><path d="M2 6.6 L4 4 L5.6 5.6 L7 4.4" stroke="#3a9a3a" stroke-width="0.9" fill="none"/><rect x="4.6" y="5.6" width="3" height="2.4" fill="#e8b02a"/></svg>
<div class="t " style="left:399.6px;top:323.5px;font-size:6.9px;color:#222">辅料</div>
<svg class="a" style="left:424.2px;top:323.6px" width="10" height="9" viewBox="0 0 10 9"><rect x="0.4" y="0.4" width="3.6" height="3.4" fill="#e24a4a"/><rect x="5.4" y="0.6" width="3.6" height="3.2" fill="#4a7fd8"/><rect x="0.6" y="5" width="3.8" height="3.6" fill="#58b84a"/><path d="M4.6 8.6 L9 2.8" stroke="#e8b02a" stroke-width="1.4"/></svg>
<div class="t " style="left:435.8px;top:323.5px;font-size:6.9px;color:#222">子件</div>
<svg class="a" style="left:458.5px;top:323.6px" width="9" height="9" viewBox="0 0 9 9"><circle cx="3.8" cy="3.8" r="3" fill="#eef3f8" stroke="#9aa4b0" stroke-width="0.9"/><path d="M5.6 5.8 L8 8.2" stroke="#d0342c" stroke-width="1.4" stroke-linecap="round"/></svg>
<div class="t " style="left:469.0px;top:323.5px;width:17.5px;font-size:6.9px;color:#222;text-align:center"></div>
<div class="a " style="left:290px;top:333.9px;width:612px;height:19px;background:#f4f4f4"></div>
<div class="t " style="left:293.5px;top:340.5px;font-size:6.9px;color:#111">添加工艺装备</div>
<svg class="a" style="left:341px;top:340px" width="8" height="10" viewBox="0 0 8 10"><path d="M0.5 0.5 h4.6 l2.2 2.2 v6.6 h-6.8Z" fill="#c8c8c8"/><path d="M1.6 4 h4.4 M1.6 5.6 h4.4 M1.6 7.2 h4.4" stroke="#aaa" stroke-width="0.6"/></svg>
<div class="t " style="left:351px;top:340.5px;font-size:6.9px;color:#b4b4b4">移去</div>
<div class="t " style="left:371px;top:340.5px;font-size:6.9px;color:#b4b4b4">检出关系</div>
<div class="a " style="left:404.5px;top:340px;width:0.8px;height:10px;background:repeating-linear-gradient(#aaa 0 1px,transparent 1px 2px)"></div>
<svg class="a" style="left:406.5px;top:340.5px" width="4" height="9" viewBox="0 0 4 9"><rect x="0.6" y="0.5" width="2.6" height="2.2" fill="#999"/><rect x="0.6" y="3.4" width="2.6" height="2.2" fill="#999"/><rect x="0.6" y="6.3" width="2.6" height="2.2" fill="#999"/></svg>
<div class="t " style="left:413px;top:340.5px;font-size:6.9px;color:#b4b4b4">取消检出</div>
<div class="a " style="left:290px;top:352.4px;width:607.3px;height:110.5px;background:#fff;border-left:1px solid #dcdcdc"></div>
<div class="a " style="left:897.3px;top:352.4px;width:2.7px;height:111px;background:#f2f2f2;border-left:1px solid #d0d0d0"></div>
<div class="a " style="left:290px;top:352.4px;width:610px;height:12px;background:linear-gradient(#f1f1f1,#e3e3e3);border-top:0.6px solid #d4d4d4;border-bottom:0.6px solid #cfcfcf"></div>
<div class="t " style="left:290.5px;top:354.1px;width:22.5px;font-size:6.9px;color:#222;text-align:center">序号</div>
<div class="a " style="left:313px;top:353.0px;width:0.7px;height:10.8px;background:#d2d2d2"></div>
<div class="t " style="left:313px;top:354.1px;width:67px;font-size:6.9px;color:#222;text-align:center">工装代号</div>
<div class="a " style="left:380px;top:353.0px;width:0.7px;height:10.8px;background:#d2d2d2"></div>
<div class="t " style="left:380px;top:354.1px;width:58px;font-size:6.9px;color:#222;text-align:center">工装简称</div>
<div class="a " style="left:438px;top:353.0px;width:0.7px;height:10.8px;background:#d2d2d2"></div>
<div class="a " style="left:877px;top:353.0px;width:0.7px;height:10.8px;background:#d2d2d2"></div>
<div class="t " style="left:877px;top:354.1px;width:23px;font-size:6.9px;color:#222;text-align:center">备注</div>
<div class="a " style="left:339.7px;top:386.2px;width:56px;height:59.6px;background:#e0e0e0;border:0.7px solid #9a9a9a;box-shadow:1px 1px 1.5px rgba(0,0,0,.25)"></div>
<div class="a " style="left:341px;top:388.8px;width:53.5px;height:11px;background:#fde79a"></div>
<svg class="a" style="left:340.2px;top:382.8px" width="59.8" height="19.2" viewBox="0 0 59.8 19.2"><rect x="1.85" y="1.85" width="56.099999999999994" height="15.5" fill="none" stroke="#f3161e" stroke-width="1.7"/></svg>
<div class="t " style="left:346.8px;top:390.5px;font-size:6.9px;color:#111">添加工艺装备</div>
<div class="t " style="left:346.8px;top:405.9px;font-size:6.9px;color:#111">显示全部</div>
<div class="t " style="left:346.8px;top:420.8px;font-size:6.9px;color:#111">查找...</div>
<div class="t " style="left:346.8px;top:432.2px;font-size:6.9px;color:#111">锁定左列</div>
<div class="a " style="left:341px;top:417px;width:53.5px;height:0.7px;background:#bdbdbd"></div>
<div class="a " style="left:470.3px;top:104.4px;width:406.09999999999997px;height:304.4px;background:#ececec;border:1.3px solid #3577b5"></div>
<div class="a " style="left:470.3px;top:104.4px;width:406.09999999999997px;height:12.4px;background:linear-gradient(#1b5893,#2a70ae)"></div>
<svg class="a" style="left:473px;top:105.6px" width="9.5" height="10.5" viewBox="0.8 0.2 7.8 8.6"><path d="M1.4 3 C2.4 0.8 6.6 0.4 7.8 2.6 C8.8 4.6 7 6.4 4.6 6.4 L4.9 5.2 C6.2 5.1 6.8 4.2 6.2 3.2 C5.6 2.4 4 2.4 3 3.2 Z" fill="#f4c22a"/><path d="M3 3.6 L4.8 3.4 L3.7 8.4 L1.6 8.4 Z" fill="#f4c22a"/></svg>
<div class="t " style="left:482.8px;top:106.5px;color:#fff;font-size:6.9px;font-weight:400">分类管理器</div>
<svg class="a" style="left:856px;top:107px" width="8" height="8" viewBox="0 0 8 8"><rect x="0.8" y="1" width="6.2" height="5.8" fill="none" stroke="#123e6b" stroke-width="1.5"/></svg>
<svg class="a" style="left:867.5px;top:107px" width="8" height="8" viewBox="0 0 8 8"><path d="M1 1 L7 7 M7 1 L1 7" stroke="#123e6b" stroke-width="1.6"/></svg>
<div class="a " style="left:471.6px;top:116.8px;width:403.49999999999994px;height:14.4px;background:#ebebeb"></div>
<svg class="a" style="left:473.3px;top:120px" width="9" height="9" viewBox="0 0 9 9"><path d="M0.8 4 A3.6 3.4 0 0 1 7 2.2 L8.2 1 V4.2 H5 L6 3.2 A2.2 2.2 0 0 0 2.4 4Z" fill="#2f86e0"/><path d="M8.2 5 A3.6 3.4 0 0 1 2 6.8 L0.8 8 V4.8 H4 L3 5.8 A2.2 2.2 0 0 0 6.6 5Z" fill="#2f86e0"/></svg>
<svg class="a" style="left:486.3px;top:120px" width="9" height="9" viewBox="0 0 9 9"><rect x="0.6" y="1.6" width="2.2" height="2" fill="#3b86d6"/><path d="M2.8 2.6 H5.4 M4 2.6 V7 H5.4 M4 4.8 H5.4" stroke="#7a9fc8" stroke-width="0.6" fill="none"/><rect x="5.4" y="1.4" width="2.8" height="2" fill="#5a9be0"/><rect x="5.4" y="3.8" width="2.8" height="2" fill="#5a9be0"/><rect x="5.4" y="6.2" width="2.8" height="2" fill="#5a9be0"/></svg>
<div class="a " style="left:498px;top:119.4px;width:92px;height:10.2px;background:#fff;border:0.5px solid #d2d2d2;border-radius:3px"></div>
<svg class="a" style="left:574px;top:121.3px" width="6" height="6.5" viewBox="0 0 6 6.5"><rect x="0.3" y="0.3" width="5.4" height="5.9" rx="0.8" fill="#e6f1fb" stroke="#9cc4ea" stroke-width="0.5"/><path d="M3 1.2 L4.7 3 H3.7 V5.2 H2.3 V3 H1.3Z" fill="#2f86e0"/></svg>
<svg class="a" style="left:582.3px;top:121.3px" width="6" height="6.5" viewBox="0 0 6 6.5"><rect x="0.3" y="0.3" width="5.4" height="5.9" rx="0.8" fill="#fdeee0" stroke="#f0b98a" stroke-width="0.5"/><path d="M3 1.2 L4.7 3 H3.7 V5.2 H2.3 V3 H1.3Z" fill="#f07a1e"/></svg>
<svg class="a" style="left:596.8px;top:120.3px" width="8.2" height="8.2" viewBox="0 0 8.2 8.2"><rect x="0.5" y="0.5" width="7.199999999999999" height="7.199999999999999" fill="#fff" stroke="#bdbdbd" stroke-width="0.8"/><path d="M1.8 4.1 L3.4439999999999995 6.299999999999999 L6.699999999999999 1.7" stroke="#c4c4c4" stroke-width="1.1" fill="none"/></svg>
<div class="t " style="left:608px;top:120.2px;font-size:6.9px;color:#b8b8b8">归档区</div>
<svg class="a" style="left:630.8px;top:120.3px" width="8.2" height="8.2" viewBox="0 0 8.2 8.2"><rect x="0.5" y="0.5" width="7.199999999999999" height="7.199999999999999" fill="#fff" stroke="#bdbdbd" stroke-width="0.8"/></svg>
<div class="t " style="left:641.3px;top:120.2px;font-size:6.9px;color:#b8b8b8">工作区</div>
<div class="a " style="left:666px;top:119.4px;width:206px;height:10.4px;background:#fff;border:0.5px solid #d2d2d2;border-radius:3px"></div>
<svg class="a" style="left:861.5px;top:120px" width="9" height="9" viewBox="0 0 8 8"><circle cx="3.3" cy="3.3" r="2.5" fill="none" stroke="#333" stroke-width="1"/><path d="M5.1 5.1 L7.3 7.3" stroke="#333" stroke-width="1.2" stroke-linecap="round"/></svg>
<div class="a " style="left:471.6px;top:131.8px;width:119.9px;height:252.6px;background:#fff;border:0.5px solid #d4d4d4"></div>
<div class="a " style="left:472.5px;top:144px;width:118.5px;height:11.7px;background:#ffeea3"></div>
<svg class="a" style="left:473.6px;top:137.2px" width="4.4" height="4.2" viewBox="0 0 4 4"><path d="M0.2 0.6H3.8L2 3.6Z" fill="#444"/></svg>
<svg class="a" style="left:481.4px;top:134px" width="8.6" height="9.6" viewBox="0 0 8 9"><path d="M1.6 0.6 V5 A2.4 2.4 0 0 0 6.4 5 V0.6" fill="none" stroke="#d8261c" stroke-width="2"/><rect x="0.6" y="0.3" width="2" height="1.4" fill="#e8b8a8"/><rect x="5.4" y="0.3" width="2" height="1.4" fill="#e8b8a8"/></svg>
<div class="t " style="left:491.5px;top:134.5px;font-size:6.9px;color:#222">工艺装备分类</div>
<svg class="a" style="left:488.8px;top:146px" width="10" height="8" viewBox="0 0 10 8"><path d="M0.6 1.6 Q0.6 0.6 1.6 0.6 H3.6 L4.6 1.6 H8.4 Q9.4 1.6 9.4 2.6 V6.4 Q9.4 7.4 8.4 7.4 H1.6 Q0.6 7.4 0.6 6.4Z" fill="#f7dc7a" stroke="#b8901e" stroke-width="0.8"/><path d="M1.4 3 H8.6" stroke="#fdf3c4" stroke-width="0.8"/></svg>
<div class="t b" style="left:500.5px;top:145.6px;font-size:6.9px">未分类</div>
<div class="a " style="left:594px;top:132.5px;width:280.5px;height:249.5px;background:#fff;border:0.5px solid #d4d4d4"></div>
<div class="a " style="left:594px;top:132.8px;width:280px;height:11.6px;background:linear-gradient(#f1f1f1,#e3e3e3);border-top:0.6px solid #d4d4d4;border-bottom:0.6px solid #cfcfcf"></div>
<div class="t " style="left:594px;top:134.3px;width:21.5px;font-size:6.9px;color:#222;text-align:center">序号</div>
<div class="a " style="left:615.5px;top:133.4px;width:0.7px;height:10.4px;background:#d2d2d2"></div>
<div class="t " style="left:615.5px;top:134.3px;width:69.5px;font-size:6.9px;color:#222;text-align:center">工装代号</div>
<div class="a " style="left:685px;top:133.4px;width:0.7px;height:10.4px;background:#d2d2d2"></div>
<div class="t " style="left:685px;top:134.3px;width:55.700000000000045px;font-size:6.9px;color:#222;text-align:center">工装简称</div>
<div class="a " style="left:740.7px;top:133.4px;width:0.7px;height:10.4px;background:#d2d2d2"></div>
<div class="t " style="left:740.7px;top:134.3px;width:90.0px;font-size:6.9px;color:#222;text-align:center">工装名称</div>
<div class="a " style="left:830.7px;top:133.4px;width:0.7px;height:10.4px;background:#d2d2d2"></div>
<div class="a " style="left:865.5px;top:133.4px;width:0.7px;height:10.4px;background:#d2d2d2"></div>
<div class="t " style="left:858.5px;top:134.3px;font-size:6.9px;color:#222">规</div>
<div class="a" style="left:594.5px;top:144.2px;width:271.0px;height:229px;overflow:hidden">
<div class="a" style="left:0;top:0.0px;width:272px;height:11.34px;background:#fff"></div>
<div class="t b" style="left:0.7000000000000455px;top:0.5700000000000003px;font-size:6.82px;width:21.5px;text-align:center">1</div>
<div class="t b" style="left:23.5px;top:0.5700000000000003px;font-size:6.82px;">C100002</div>
<div class="t b" style="left:91.20000000000005px;top:0.5700000000000003px;font-size:6.82px;"></div>
<div class="t b" style="left:148.10000000000002px;top:0.5700000000000003px;font-size:6.82px;width:87.5px;overflow:hidden">冲头</div>
<div class="t b" style="left:237.5px;top:0.5700000000000003px;font-size:6.82px;width:33.5px;overflow:hidden">Φ10</div>
<div class="a" style="left:0;top:11.34px;width:272px;height:11.34px;background:#e7effb"></div>
<div class="t b" style="left:0.7000000000000455px;top:11.909999999999997px;font-size:6.82px;width:21.5px;text-align:center">2</div>
<div class="t b" style="left:23.5px;top:11.909999999999997px;font-size:6.82px;">C100003</div>
<div class="t b" style="left:91.20000000000005px;top:11.909999999999997px;font-size:6.82px;"></div>
<div class="t b" style="left:148.10000000000002px;top:11.909999999999997px;font-size:6.82px;width:87.5px;overflow:hidden">冲头</div>
<div class="t b" style="left:237.5px;top:11.909999999999997px;font-size:6.82px;width:33.5px;overflow:hidden">Φ12</div>
<div class="a" style="left:0;top:22.68px;width:272px;height:11.34px;background:#fff"></div>
<div class="t b" style="left:0.7000000000000455px;top:23.25px;font-size:6.82px;width:21.5px;text-align:center">3</div>
<div class="t b" style="left:23.5px;top:23.25px;font-size:6.82px;">C100004</div>
<div class="t b" style="left:91.20000000000005px;top:23.25px;font-size:6.82px;"></div>
<div class="t b" style="left:148.10000000000002px;top:23.25px;font-size:6.82px;width:87.5px;overflow:hidden">冲头</div>
<div class="t b" style="left:237.5px;top:23.25px;font-size:6.82px;width:33.5px;overflow:hidden">Φ16</div>
<div class="a" style="left:0;top:34.019999999999996px;width:272px;height:11.34px;background:#e7effb"></div>
<div class="t b" style="left:0.7000000000000455px;top:34.589999999999996px;font-size:6.82px;width:21.5px;text-align:center">4</div>
<div class="t b" style="left:23.5px;top:34.589999999999996px;font-size:6.82px;">C100005</div>
<div class="t b" style="left:91.20000000000005px;top:34.589999999999996px;font-size:6.82px;"></div>
<div class="t b" style="left:148.10000000000002px;top:34.589999999999996px;font-size:6.82px;width:87.5px;overflow:hidden">冲头</div>
<div class="t b" style="left:237.5px;top:34.589999999999996px;font-size:6.82px;width:33.5px;overflow:hidden">Φ9</div>
<div class="a" style="left:0;top:45.36px;width:272px;height:11.34px;background:#fff"></div>
<div class="t b" style="left:0.7000000000000455px;top:45.93px;font-size:6.82px;width:21.5px;text-align:center">5</div>
<div class="t b" style="left:23.5px;top:45.93px;font-size:6.82px;">C100006</div>
<div class="t b" style="left:91.20000000000005px;top:45.93px;font-size:6.82px;"></div>
<div class="t b" style="left:148.10000000000002px;top:45.93px;font-size:6.82px;width:87.5px;overflow:hidden">冲头</div>
<div class="t b" style="left:237.5px;top:45.93px;font-size:6.82px;width:33.5px;overflow:hidden">Φ15</div>
<div class="a" style="left:0;top:56.7px;width:272px;height:11.34px;background:#e7effb"></div>
<div class="t b" style="left:0.7000000000000455px;top:57.27px;font-size:6.82px;width:21.5px;text-align:center">6</div>
<div class="t b" style="left:23.5px;top:57.27px;font-size:6.82px;">C100007</div>
<div class="t b" style="left:91.20000000000005px;top:57.27px;font-size:6.82px;"></div>
<div class="t b" style="left:148.10000000000002px;top:57.27px;font-size:6.82px;width:87.5px;overflow:hidden">冲头</div>
<div class="t b" style="left:237.5px;top:57.27px;font-size:6.82px;width:33.5px;overflow:hidden">Φ18</div>
<div class="a" style="left:0;top:68.03999999999999px;width:272px;height:11.34px;background:#fff"></div>
<div class="t b" style="left:0.7000000000000455px;top:68.61px;font-size:6.82px;width:21.5px;text-align:center">7</div>
<div class="t b" style="left:23.5px;top:68.61px;font-size:6.82px;">G2296_810_000</div>
<div class="t b" style="left:91.20000000000005px;top:68.61px;font-size:6.82px;">平衡涡轮</div>
<div class="t b" style="left:148.10000000000002px;top:68.61px;font-size:6.82px;width:87.5px;overflow:hidden">平衡涡轮工艺轴</div>
<div class="t b" style="left:237.5px;top:68.61px;font-size:6.82px;width:33.5px;overflow:hidden">2296_810_</div>
<div class="a" style="left:0;top:79.38px;width:272px;height:11.34px;background:#e7effb"></div>
<div class="t b" style="left:0.7000000000000455px;top:79.95px;font-size:6.82px;width:21.5px;text-align:center">8</div>
<div class="t b" style="left:23.5px;top:79.95px;font-size:6.82px;">G2296_812_000</div>
<div class="t b" style="left:91.20000000000005px;top:79.95px;font-size:6.82px;"></div>
<div class="t b" style="left:148.10000000000002px;top:79.95px;font-size:6.82px;width:87.5px;overflow:hidden">平衡齿轮工艺轴</div>
<div class="t b" style="left:237.5px;top:79.95px;font-size:6.82px;width:33.5px;overflow:hidden">2296_812_</div>
<div class="a" style="left:0;top:90.72px;width:272px;height:11.34px;background:#fff"></div>
<div class="t b" style="left:0.7000000000000455px;top:91.29px;font-size:6.82px;width:21.5px;text-align:center">9</div>
<div class="t b" style="left:23.5px;top:91.29px;font-size:6.82px;">G2296_813_000</div>
<div class="t b" style="left:91.20000000000005px;top:91.29px;font-size:6.82px;"></div>
<div class="t b" style="left:148.10000000000002px;top:91.29px;font-size:6.82px;width:87.5px;overflow:hidden">密封板平衡固定装置</div>
<div class="t b" style="left:237.5px;top:91.29px;font-size:6.82px;width:33.5px;overflow:hidden">2296_813_</div>
<div class="a" style="left:0;top:102.06px;width:272px;height:11.34px;background:#e7effb"></div>
<div class="t b" style="left:0.7000000000000455px;top:102.63000000000001px;font-size:6.82px;width:21.5px;text-align:center">10</div>
<div class="t b" style="left:23.5px;top:102.63000000000001px;font-size:6.82px;">G2296_907_000</div>
<div class="t b" style="left:91.20000000000005px;top:102.63000000000001px;font-size:6.82px;"></div>
<div class="t b" style="left:148.10000000000002px;top:102.63000000000001px;font-size:6.82px;width:87.5px;overflow:hidden">卡箦压装工具</div>
<div class="t b" style="left:237.5px;top:102.63000000000001px;font-size:6.82px;width:33.5px;overflow:hidden">2296_907_</div>
<div class="a" style="left:0;top:113.4px;width:272px;height:11.34px;background:#fff"></div>
<div class="t b" style="left:0.7000000000000455px;top:113.97000000000001px;font-size:6.82px;width:21.5px;text-align:center">11</div>
<div class="t b" style="left:23.5px;top:113.97000000000001px;font-size:6.82px;">G2296_WZ_100</div>
<div class="t b" style="left:91.20000000000005px;top:113.97000000000001px;font-size:6.82px;"></div>
<div class="t b" style="left:148.10000000000002px;top:113.97000000000001px;font-size:6.82px;width:87.5px;overflow:hidden">起动机牵引工装</div>
<div class="t b" style="left:237.5px;top:113.97000000000001px;font-size:6.82px;width:33.5px;overflow:hidden">2296_WZ_</div>
<div class="a" style="left:0;top:124.74px;width:272px;height:11.34px;background:#e7effb"></div>
<div class="t b" style="left:0.7000000000000455px;top:125.31px;font-size:6.82px;width:21.5px;text-align:center">12</div>
<div class="t b" style="left:23.5px;top:125.31px;font-size:6.82px;">GABB000001HLA0...</div>
<div class="t b" style="left:91.20000000000005px;top:125.31px;font-size:6.82px;"></div>
<div class="t b" style="left:148.10000000000002px;top:125.31px;font-size:6.82px;width:87.5px;overflow:hidden">ABB TPR56叶片卧车A工艺...</div>
<div class="t b" style="left:237.5px;top:125.31px;font-size:6.82px;width:33.5px;overflow:hidden">HZTL1177:</div>
<div class="a" style="left:0;top:136.07999999999998px;width:272px;height:11.34px;background:#fff"></div>
<div class="t b" style="left:0.7000000000000455px;top:136.64999999999998px;font-size:6.82px;width:21.5px;text-align:center">13</div>
<div class="t b" style="left:23.5px;top:136.64999999999998px;font-size:6.82px;">GABB000001HMB0...</div>
<div class="t b" style="left:91.20000000000005px;top:136.64999999999998px;font-size:6.82px;"></div>
<div class="t b" style="left:148.10000000000002px;top:136.64999999999998px;font-size:6.82px;width:87.5px;overflow:hidden">ABB TPR56叶片B工艺N20...</div>
<div class="t b" style="left:237.5px;top:136.64999999999998px;font-size:6.82px;width:33.5px;overflow:hidden">HTL11772-</div>
<div class="a" style="left:0;top:147.42px;width:272px;height:11.34px;background:#e7effb"></div>
<div class="t b" style="left:0.7000000000000455px;top:147.98999999999998px;font-size:6.82px;width:21.5px;text-align:center">14</div>
<div class="t b" style="left:23.5px;top:147.98999999999998px;font-size:6.82px;">GABB000005HLA0...</div>
<div class="t b" style="left:91.20000000000005px;top:147.98999999999998px;font-size:6.82px;"></div>
<div class="t b" style="left:148.10000000000002px;top:147.98999999999998px;font-size:6.82px;width:87.5px;overflow:hidden">ABB-HZTL19397-N20/N40</div>
<div class="t b" style="left:237.5px;top:147.98999999999998px;font-size:6.82px;width:33.5px;overflow:hidden">ABB-HZTL'</div>
<div class="a" style="left:0;top:158.76px;width:272px;height:11.34px;background:#fff"></div>
<div class="t b" style="left:0.7000000000000455px;top:159.32999999999998px;font-size:6.82px;width:21.5px;text-align:center">15</div>
<div class="t b" style="left:23.5px;top:159.32999999999998px;font-size:6.82px;">GABB000005HLA0...</div>
<div class="t b" style="left:91.20000000000005px;top:159.32999999999998px;font-size:6.82px;"></div>
<div class="t b" style="left:148.10000000000002px;top:159.32999999999998px;font-size:6.82px;width:87.5px;overflow:hidden">ABB-HZTL19397-N30</div>
<div class="t b" style="left:237.5px;top:159.32999999999998px;font-size:6.82px;width:33.5px;overflow:hidden">ABB-HZTL'</div>
<div class="a" style="left:0;top:170.1px;width:272px;height:11.34px;background:#e7effb"></div>
<div class="t b" style="left:0.7000000000000455px;top:170.67px;font-size:6.82px;width:21.5px;text-align:center">16</div>
<div class="t b" style="left:23.5px;top:170.67px;font-size:6.82px;">GABB000006HLA0...</div>
<div class="t b" style="left:91.20000000000005px;top:170.67px;font-size:6.82px;"></div>
<div class="t b" style="left:148.10000000000002px;top:170.67px;font-size:6.82px;width:87.5px;overflow:hidden">ABB-HZTL-218660-N20</div>
<div class="t b" style="left:237.5px;top:170.67px;font-size:6.82px;width:33.5px;overflow:hidden">ABB-HZTL-</div>
<div class="a" style="left:0;top:181.44px;width:272px;height:11.34px;background:#fff"></div>
<div class="t b" style="left:0.7000000000000455px;top:182.01px;font-size:6.82px;width:21.5px;text-align:center">17</div>
<div class="t b" style="left:23.5px;top:182.01px;font-size:6.82px;">GABB000006HLA0...</div>
<div class="t b" style="left:91.20000000000005px;top:182.01px;font-size:6.82px;"></div>
<div class="t b" style="left:148.10000000000002px;top:182.01px;font-size:6.82px;width:87.5px;overflow:hidden">ABB-HZTL-218660-N30-01</div>
<div class="t b" style="left:237.5px;top:182.01px;font-size:6.82px;width:33.5px;overflow:hidden">ABB-HZTL-</div>
<div class="a" style="left:0;top:192.78px;width:272px;height:11.34px;background:#e7effb"></div>
<div class="t b" style="left:0.7000000000000455px;top:193.35px;font-size:6.82px;width:21.5px;text-align:center">18</div>
<div class="t b" style="left:23.5px;top:193.35px;font-size:6.82px;">GABB000006HLA0...</div>
<div class="t b" style="left:91.20000000000005px;top:193.35px;font-size:6.82px;"></div>
<div class="t b" style="left:148.10000000000002px;top:193.35px;font-size:6.82px;width:87.5px;overflow:hidden">ABB-HZTL-218660-N40</div>
<div class="t b" style="left:237.5px;top:193.35px;font-size:6.82px;width:33.5px;overflow:hidden">ABB-HZTL-</div>
<div class="a" style="left:0;top:204.12px;width:272px;height:11.34px;background:#fff"></div>
<div class="t b" style="left:0.7000000000000455px;top:204.69px;font-size:6.82px;width:21.5px;text-align:center">19</div>
<div class="t b" style="left:23.5px;top:204.69px;font-size:6.82px;">GABB000007HLA0...</div>
<div class="t b" style="left:91.20000000000005px;top:204.69px;font-size:6.82px;"></div>
<div class="t b" style="left:148.10000000000002px;top:204.69px;font-size:6.82px;width:87.5px;overflow:hidden">ABB喷嘴环HZTL218051数...</div>
<div class="t b" style="left:237.5px;top:204.69px;font-size:6.82px;width:33.5px;overflow:hidden">HZTL2180!</div>
<div class="a" style="left:0;top:215.46px;width:272px;height:11.34px;background:#e7effb"></div>
<div class="t b" style="left:0.7000000000000455px;top:216.03px;font-size:6.82px;width:21.5px;text-align:center">20</div>
<div class="t b" style="left:23.5px;top:216.03px;font-size:6.82px;">GABB000007HLA0...</div>
<div class="t b" style="left:91.20000000000005px;top:216.03px;font-size:6.82px;"></div>
<div class="t b" style="left:148.10000000000002px;top:216.03px;font-size:6.82px;width:87.5px;overflow:hidden">HZTL218050/HZTL218051...</div>
<div class="t b" style="left:237.5px;top:216.03px;font-size:6.82px;width:33.5px;overflow:hidden">ABB-2180!</div>
<div class="a" style="left:0;top:226.8px;width:272px;height:11.34px;background:#fff"></div>
<div class="t b" style="left:0.7000000000000455px;top:227.37px;font-size:6.82px;width:21.5px;text-align:center">21</div>
<div class="t b" style="left:23.5px;top:227.37px;font-size:6.82px;">GABB000007HLA0...</div>
<div class="t b" style="left:91.20000000000005px;top:227.37px;font-size:6.82px;"></div>
<div class="t b" style="left:148.10000000000002px;top:227.37px;font-size:6.82px;width:87.5px;overflow:hidden">ABB喷嘴环HZTL218051数...</div>
<div class="t b" style="left:237.5px;top:227.37px;font-size:6.82px;width:33.5px;overflow:hidden">ABB-2180</div>
</div>
<div class="a " style="left:865.5px;top:144.4px;width:8.5px;height:230.3px;background:#f1f1f1"></div>
<div class="a " style="left:866.3px;top:151px;width:7px;height:23px;background:#c9c9c9"></div>
<svg class="a" style="left:867.8px;top:146px" width="5" height="4" viewBox="0 0 4 3"><path d="M0.3 2.7H3.7L2 0.4Z" fill="#555"/></svg>
<svg class="a" style="left:867.8px;top:366.5px" width="5" height="4" viewBox="0 0 4 3"><path d="M0.3 0.3H3.7L2 2.6Z" fill="#555"/></svg>
<div class="a " style="left:594.5px;top:373.2px;width:279.5px;height:8.5px;background:#f1f1f1"></div>
<div class="a " style="left:603px;top:374.4px;width:69px;height:6.4px;background:#d0d0d0"></div>
<svg class="a" style="left:597.5px;top:375.4px" width="4.5" height="4.5" viewBox="0 0 4 4"><path d="M3.4 0.3V3.7L0.6 2Z" fill="#555"/></svg>
<svg class="a" style="left:858.8px;top:375.4px" width="4.5" height="4.5" viewBox="0 0 4 4"><path d="M0.6 0.3V3.7L3.4 2Z" fill="#555"/></svg>
<div class="a " style="left:793.3px;top:390.4px;width:21.7px;height:12.8px;background:linear-gradient(#ececec,#dedede);border:0.6px solid #dadada;border-radius:1.5px"></div>
<div class="t " style="left:793.3px;top:392.4px;width:21.7px;font-size:6.9px;color:#111;text-align:center">复制</div>
<div class="a " style="left:824px;top:390.4px;width:16.5px;height:12.8px;background:linear-gradient(#ececec,#dedede);border:0.6px solid #dadada;border-radius:1.5px"></div>
<div class="t " style="left:824px;top:392.4px;width:16.5px;font-size:6.9px;color:#111;text-align:center">引用</div>
<div class="a " style="left:848.3px;top:390.4px;width:22.4px;height:12.8px;background:linear-gradient(#ececec,#dedede);border:0.6px solid #dadada;border-radius:1.5px"></div>
<div class="t " style="left:848.3px;top:392.4px;width:22.4px;font-size:6.9px;color:#111;text-align:center">取消</div>
<svg class="a" style="left:821.3px;top:385px" width="21.8" height="21" viewBox="0 0 21.8 21"><rect x="1.85" y="1.85" width="18.1" height="17.3" fill="none" stroke="#f3161e" stroke-width="1.7"/></svg>
</body></html>
